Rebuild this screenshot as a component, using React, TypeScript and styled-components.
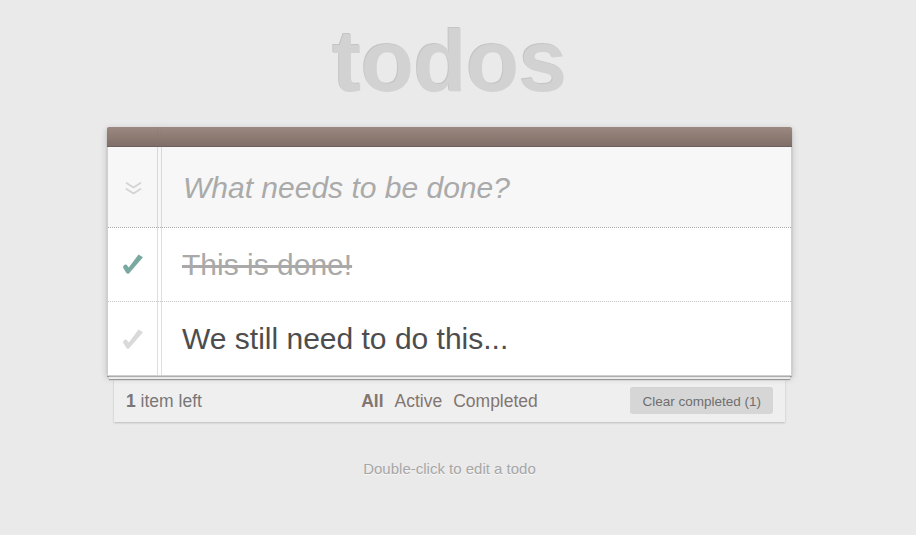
import React from "react";
import styled, { createGlobalStyle } from "styled-components";

const Global = createGlobalStyle`
  html, body { margin: 0; padding: 0; }
  body {
    background: #eaeaea;
    font-family: "Liberation Sans", Arial, Helvetica, sans-serif;
    color: #4d4d4d;
  }
`;

const Viewport = styled.div`
  width: 899px;
`;

const Page = styled.div`
  width: 685px;
  margin: 0 auto;
`;

const Title = styled.h1`
  margin: 17px 0 0;
  height: 87px;
  font-size: 87px;
  line-height: 87px;
  font-weight: bold;
  text-align: center;
  color: #d2d2d2;
  text-shadow: -1px -1px 0 rgba(0, 0, 0, 0.16);
  letter-spacing: -0.5px;
`;

const App = styled.section`
  position: relative;
  z-index: 2;
  margin-top: 23px;
  background: #fff;
  border: 1px solid #cfcfcf;
  border-top: none;
  border-radius: 2px 2px 0 0;
  box-shadow: 0 1px 1px rgba(0, 0, 0, 0.3), 0 5px 0 -2px rgba(255, 255, 255, 0.85),
    0 6px 1px -2px rgba(0, 0, 0, 0.3), 0 2px 7px 0 rgba(0, 0, 0, 0.2);

  &::before {
    content: "";
    position: absolute;
    top: 0;
    bottom: 0;
    left: 49px;
    width: 3px;
    border-left: 1px solid rgba(215, 85, 85, 0.25);
    border-right: 1px solid rgba(215, 85, 85, 0.25);
    z-index: 3;
    pointer-events: none;
  }
`;

const TopBar = styled.div`
  height: 19px;
  margin: 0 -1px;
  border-bottom: 1px solid #6c615c;
  background: linear-gradient(#9c8880, #7f6f68);
  border-radius: 2px 2px 0 0;
`;

const Row = styled.div<{ $bg?: string; $line?: string }>`
  display: grid;
  grid-template-columns: 49px 1fr;
  align-items: center;
  background: ${(p) => p.$bg || "#fff"};
  border-bottom: ${(p) => (p.$line ? `1px dotted ${p.$line}` : "none")};
`;

const ToggleCell = styled.div<{ $shift?: number }>`
  display: flex;
  align-items: center;
  justify-content: center;
  padding-left: 1px;
  margin-top: ${(p) => p.$shift || 0}px;
`;

const NewTodo = styled.div`
  height: 79px;
  padding-left: 26px;
  display: flex;
  align-items: center;
  font-size: 30px;
  font-style: italic;
  color: #aaaaaa;
  margin-top: 1px;
`;

const Label = styled.div<{ $done?: boolean }>`
  padding: 19px 0 19px 25px;
  font-size: 30px;
  line-height: 35px;
  white-space: pre;
  color: ${(p) => (p.$done ? "#a9a9a9" : "#4d4d4d")};
  text-decoration: ${(p) => (p.$done ? "line-through" : "none")};
`;

const Footer = styled.footer`
  position: relative;
  z-index: 1;
  margin: 4px 7px 0;
  height: 42px;
  padding: 0 12px;
  background: #efefef;
  box-shadow: 0 1px 2px rgba(0, 0, 0, 0.2);
  display: grid;
  grid-template-columns: 1fr auto 1fr;
  align-items: center;
  color: #777;
  font-size: 17.5px;
`;

const Count = styled.span`
  strong { font-weight: bold; }
`;

const Filters = styled.div`
  display: flex;
  gap: 11px;
  color: #83756f;
`;

const Filter = styled.span<{ $sel?: boolean }>`
  font-weight: ${(p) => (p.$sel ? "bold" : "normal")};
`;

const Clear = styled.button`
  justify-self: end;
  height: 26px;
  padding: 0 12px;
  border: none;
  border-radius: 3px;
  background: #d6d6d6;
  box-shadow: 0 -1px 0 0 rgba(0, 0, 0, 0.12);
  color: #6e6e6e;
  font-family: inherit;
  font-size: 13.5px;
`;

const Info = styled.p`
  margin: 38px 0 0;
  text-align: center;
  font-size: 15px;
  line-height: 18px;
  color: #a6a6a6;
  text-shadow: 0 1px 0 rgba(255, 255, 255, 0.7);
`;

const Check = ({ done }: { done?: boolean }) => (
  <svg width="20" height="20" viewBox="0 0 20 20">
    <path
      d="M15.5 0.5 L20 3.2 L6.2 19.2 C5.4 20 4 20 3.4 19.1 L0.3 14 C-0.2 13 0.4 11.6 1.4 11 C2.5 10.3 3.4 10.5 4 11.2 L5.8 13.4 Z"
      fill={done ? "#7aa9a1" : "#dadada"}
    />
  </svg>
);

const Chevrons = () => (
  <svg width="17" height="15" viewBox="0 0 17 15">
    <g fill="none" stroke="#d4d4d4" strokeWidth="1.8" strokeLinecap="round" strokeLinejoin="round">
      <polyline points="1.5,2 8.5,6.5 15.5,2" />
      <polyline points="1.5,8 8.5,12.5 15.5,8" />
    </g>
  </svg>
);

export default function AppRoot() {
  return (
    <Viewport>
      <Global />
      <Page>
        <Title>todos</Title>
        <App>
          <TopBar />
          <Row $bg="#f7f7f7" $line="#adadad">
            <ToggleCell $shift={3}>
              <Chevrons />
            </ToggleCell>
            <NewTodo>What needs to be done?</NewTodo>
          </Row>
          <Row $line="#c8c8c8">
            <ToggleCell $shift={-2}>
              <Check done />
            </ToggleCell>
            <Label $done>This is done!</Label>
          </Row>
          <Row>
            <ToggleCell>
              <Check />
            </ToggleCell>
            <Label>We still need to do this...</Label>
          </Row>
        </App>
        <Footer>
          <Count>
            <strong>1</strong> item left
          </Count>
          <Filters>
            <Filter $sel>All</Filter>
            <Filter>Active</Filter>
            <Filter>Completed</Filter>
          </Filters>
          <Clear>Clear completed (1)</Clear>
        </Footer>
        <Info>Double-click to edit a todo</Info>
      </Page>
    </Viewport>
  );
}
